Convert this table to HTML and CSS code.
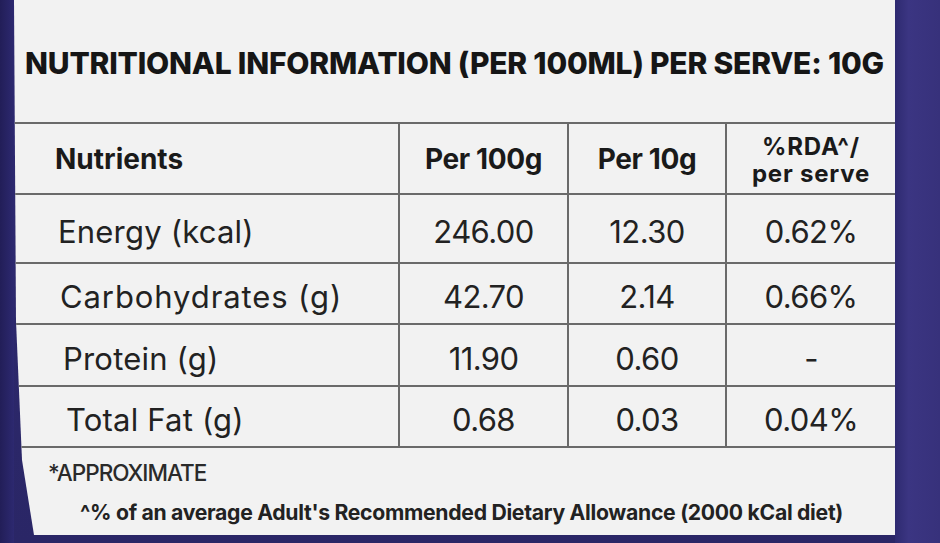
FILE: index.html
```html
<!DOCTYPE html>
<html>
<head>
<meta charset="utf-8">
<link rel="stylesheet" href="styles.css">
</head>
<body>
<div class="scene">
  <div class="edge-left"></div>
  <div class="label">
    <h1 class="title">NUTRITIONAL INFORMATION (PER 100ML) PER SERVE: 10G</h1>
    <div class="table">
      <div class="row head">
        <div class="cell name">Nutrients</div>
        <div class="cell">Per 100g</div>
        <div class="cell">Per 10g</div>
        <div class="cell rda"><span class="rda-line">%RDA^/</span><span class="rda-line">per serve</span></div>
      </div>
      <div class="row r1">
        <div class="cell name">Energy (kcal)</div>
        <div class="cell">246.00</div>
        <div class="cell">12.30</div>
        <div class="cell">0.62%</div>
      </div>
      <div class="row r2">
        <div class="cell name">Carbohydrates (g)</div>
        <div class="cell">42.70</div>
        <div class="cell">2.14</div>
        <div class="cell">0.66%</div>
      </div>
      <div class="row r3">
        <div class="cell name">Protein (g)</div>
        <div class="cell">11.90</div>
        <div class="cell">0.60</div>
        <div class="cell">-</div>
      </div>
      <div class="row r4">
        <div class="cell name">Total Fat (g)</div>
        <div class="cell">0.68</div>
        <div class="cell">0.03</div>
        <div class="cell">0.04%</div>
      </div>
    </div>
    <div class="notes">
      <p class="approx">*APPROXIMATE</p>
      <p class="rda-note">^% of an average Adult's Recommended Dietary Allowance (2000 kCal diet)</p>
    </div>
  </div>
  <div class="edge-right"></div>
</div>
</body>
</html>
```

FILE: styles.css
```css
html, body {
  margin: 0;
  padding: 0;
}
body {
  width: 940px;
  height: 543px;
  overflow: hidden;
  background: #2f2b72;
  font-family: "Inter", "Liberation Sans", sans-serif;
  color: #1c1c1c;
}
.scene {
  display: flex;
  height: 543px;
  background: linear-gradient(180deg, #2f2b72, #2a2666);
}
.edge-left {
  width: 14px;
  background: linear-gradient(90deg, #221e58, #2d2970);
}
.edge-right {
  flex: 1;
  background: linear-gradient(90deg, #2e2a70, #3b3582 30%, #37317b);
}
.label {
  width: 881px;
  height: 535px;
  background: #f2f2f2;
  display: flex;
  flex-direction: column;
  clip-path: polygon(0 0, 100% 0, 100% 100%, 20px 100%, 8px 86%, 2px 60%);
}
.title {
  margin: 0;
  height: 122px;
  display: flex;
  align-items: center;
  justify-content: center;
  padding-top: 4px;
  box-sizing: border-box;
  font-size: 30px;
  font-weight: 800;
  letter-spacing: -0.2px;
  color: #161616;
}
.table {
  border-top: 2px solid #6a6a6a;
}
.row {
  display: grid;
  grid-template-columns: 384px 169px 158px 1fr;
  border-bottom: 2px solid #6a6a6a;
}
.head { height: 69px; }
.r1 { height: 67px; }
.r2 { height: 59px; }
.r3 { height: 60px; }
.r4 { height: 59px; }
.cell {
  display: flex;
  align-items: center;
  justify-content: center;
  padding-top: 6px;
  box-sizing: border-box;
  border-left: 2px solid #6a6a6a;
  font-size: 31px;
  font-weight: 400;
  letter-spacing: -0.6px;
  color: #222;
}
.cell.name {
  border-left: none;
  justify-content: flex-start;
  padding-left: 44px;
  letter-spacing: 0.2px;
}
.r2 .cell.name { padding-left: 46px; letter-spacing: 0.9px; }
.r3 .cell.name { padding-left: 49px; }
.r4 .cell.name { padding-left: 52px; }
.head .cell {
  font-weight: 700;
  font-size: 28px;
  letter-spacing: -0.4px;
  color: #1a1a1a;
  padding-top: 0;
}
.head .cell.name { padding-left: 41px; letter-spacing: 0; }
.head .rda {
  flex-direction: column;
  text-align: center;
  font-size: 24px;
  letter-spacing: 0.8px;
  padding-top: 2px;
}
.rda-line {
  display: block;
  line-height: 27px;
}
.notes {
  flex: 1;
  display: flex;
  flex-direction: column;
  padding: 11px 0 0 34px;
}
.notes p { margin: 0; }
.approx {
  font-size: 22.5px;
  font-weight: 500;
  letter-spacing: -1px;
  color: #2a2a2a;
}
.rda-note {
  margin-top: 13px !important;
  padding-left: 32px;
  font-size: 21.2px;
  font-weight: 700;
  letter-spacing: -0.3px;
  color: #222;
}
```
